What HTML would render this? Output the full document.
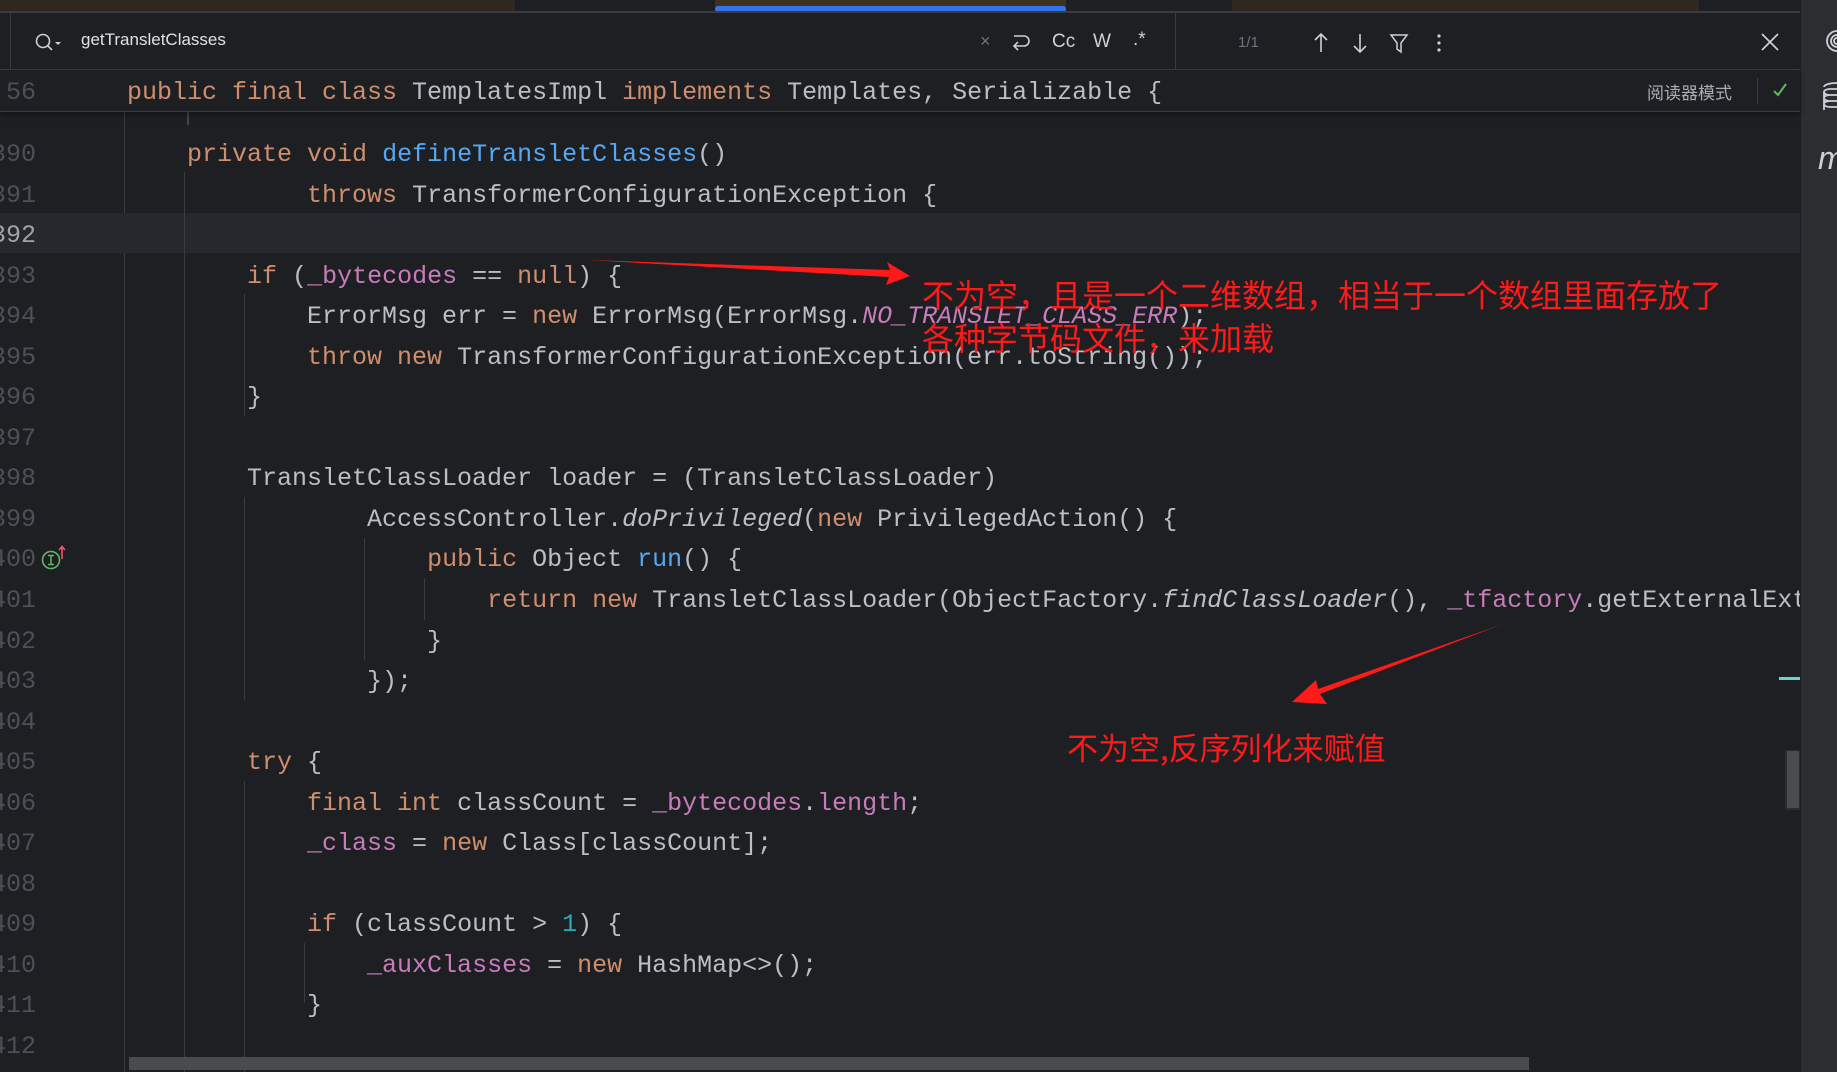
<!DOCTYPE html>
<html><head><meta charset="utf-8"><style>
*{margin:0;padding:0;box-sizing:border-box}
body{width:1837px;height:1072px;background:#1e1f22;position:relative;overflow:hidden;font-family:"Liberation Sans","Noto Sans CJK SC",sans-serif}
.abs{position:absolute}
.code{font-family:"Liberation Mono",monospace;font-size:25px;white-space:pre;color:#bcbec4;line-height:40.55px;height:40.55px}
.k{color:#cf8e6d}.f{color:#56a8f5}.v{color:#c77dbb}.n{color:#2aacb8}.i{font-style:italic}.vi{color:#c77dbb;font-style:italic}
.ln{font-family:"Liberation Mono",monospace;font-size:25px;color:#4b5059;text-align:right;width:36px;line-height:40.55px;height:40.55px;overflow:visible;white-space:nowrap;direction:rtl}
.g{position:absolute;width:1px;background:#393b40}
.ic{position:absolute;color:#ced0d6;font-size:19px}
.red{color:#ff1a1a;font-family:"Noto Sans CJK SC","WenQuanYi Zen Hei",sans-serif}
</style></head><body>
<div class="abs" style="left:0;top:0;width:1800px;height:11px;background:#1e1f22"></div>
<div class="abs" style="left:0;top:0;width:515px;height:11px;background:#2e2820"></div>
<div class="abs" style="left:715px;top:0;width:351px;height:11px;background:#3d3122"></div>
<div class="abs" style="left:1232px;top:0;width:467px;height:11px;background:#2e2820"></div>
<div class="abs" style="left:715px;top:6px;width:351px;height:6px;background:#3574f0;border-radius:3px"></div>
<div class="abs" style="left:0;top:11px;width:1800px;height:2px;background:#393b40"></div>
<div class="abs" style="left:0;top:13px;width:1800px;height:57px;background:#1e1f22;border-bottom:1px solid #393b40"></div>
<div class="abs" style="left:10px;top:13px;width:1px;height:57px;background:#393b40"></div>
<div class="abs" style="left:1175px;top:13px;width:1px;height:57px;background:#393b40"></div>
<svg class="abs" style="left:34px;top:31px" width="30" height="24" viewBox="0 0 30 24"><circle cx="9" cy="10" r="6.5" fill="none" stroke="#ced0d6" stroke-width="1.6"/><path d="M13.5 14.5 L18 19" stroke="#ced0d6" stroke-width="1.6"/><path d="M21 11 L27 11 L24 14Z" fill="#ced0d6"/></svg>
<div class="abs" style="left:81px;top:30px;font-size:17px;color:#dfe1e5">getTransletClasses</div>
<div class="ic" style="left:980px;top:31px;color:#6f737a;font-size:18px">×</div>
<svg class="abs" style="left:1009px;top:30px" width="24" height="24" viewBox="0 0 24 24"><path d="M5 6 H15 a5 5 0 0 1 0 10 H5 M9 12 L5 16 L9 20" fill="none" stroke="#ced0d6" stroke-width="1.6"/></svg>
<div class="ic" style="left:1052px;top:31px">Cc</div>
<div class="ic" style="left:1093px;top:31px">W</div>
<div class="ic" style="left:1133px;top:29px">.*</div>
<div class="abs" style="left:1238px;top:34px;font-size:15px;color:#6f737a">1/1</div>
<svg class="abs" style="left:1310px;top:31px" width="150" height="24" viewBox="0 0 150 24"><path d="M11 3 V21 M5 9 L11 3 L17 9" fill="none" stroke="#ced0d6" stroke-width="1.6"/><path d="M50 3 V21 M44 15 L50 21 L56 15" fill="none" stroke="#ced0d6" stroke-width="1.6"/><path d="M81 4 H97 L91 12 V21 L87 18 V12Z" fill="none" stroke="#ced0d6" stroke-width="1.5"/><circle cx="129" cy="5" r="1.6" fill="#ced0d6"/><circle cx="129" cy="12" r="1.6" fill="#ced0d6"/><circle cx="129" cy="19" r="1.6" fill="#ced0d6"/></svg>
<svg class="abs" style="left:1760px;top:32px" width="20" height="20" viewBox="0 0 20 20"><path d="M2 2 L18 18 M18 2 L2 18" stroke="#ced0d6" stroke-width="1.7"/></svg>
<div class="abs" style="left:0;top:70px;width:1800px;height:42px;background:#1e1f22;border-bottom:1px solid #393b40;box-shadow:0 3px 5px rgba(0,0,0,.35);z-index:3">
<div class="ln abs" style="left:0;top:3px">56</div>
<div class="code abs" style="left:127px;top:3px"><span class="k">public final class </span>TemplatesImpl <span class="k">implements </span>Templates, Serializable {</div>
<div class="abs" style="left:1647px;top:9px;font-size:17px;color:#a8adb5;font-family:'Noto Sans CJK SC',sans-serif">阅读器模式</div>
<div class="abs" style="left:1757px;top:8px;width:1px;height:26px;background:#393b40"></div>
<svg class="abs" style="left:1772px;top:12px" width="16" height="16" viewBox="0 0 16 16"><path d="M2 9 L6 13 L14 2" fill="none" stroke="#5fb865" stroke-width="2"/></svg>
</div>
<div class="abs" style="left:187px;top:112px;width:2px;height:13px;background:#3b4a3e"></div>
<div class="g" style="left:124px;top:112px;height:960px"></div>
<div class="abs" style="left:0;top:213px;width:1800px;height:40px;background:#26282e"></div>
<div class="g" style="left:184px;top:172px;height:900px"></div>
<div class="g" style="left:244px;top:294px;height:122px"></div>
<div class="g" style="left:244px;top:497px;height:203px"></div>
<div class="g" style="left:244px;top:781px;height:291px"></div>
<div class="g" style="left:304px;top:943px;height:60px"></div>
<div class="g" style="left:364px;top:538px;height:122px"></div>
<div class="g" style="left:424px;top:578px;height:42px"></div>
<div class="abs" style="left:0;top:135px;width:1800px;height:927px;overflow:hidden">
<div class="abs" style="left:0;top:0">
<div class="ln">390</div><div class="ln">391</div><div class="ln" style="color:#a1a3ab">392</div><div class="ln">393</div><div class="ln">394</div><div class="ln">395</div><div class="ln">396</div><div class="ln">397</div><div class="ln">398</div><div class="ln">399</div><div class="ln">400</div><div class="ln">401</div><div class="ln">402</div><div class="ln">403</div><div class="ln">404</div><div class="ln">405</div><div class="ln">406</div><div class="ln">407</div><div class="ln">408</div><div class="ln">409</div><div class="ln">410</div><div class="ln">411</div><div class="ln">412</div>
</div>
<div class="abs" style="left:127px;top:0">
<div class="code">    <span class="k">private void </span><span class="f">defineTransletClasses</span>()</div>
<div class="code">            <span class="k">throws </span>TransformerConfigurationException {</div>
<div class="code"> </div>
<div class="code">        <span class="k">if </span>(<span class="v">_bytecodes</span> == <span class="k">null</span>) {</div>
<div class="code">            ErrorMsg err = <span class="k">new </span>ErrorMsg(ErrorMsg.<span class="vi">NO_TRANSLET_CLASS_ERR</span>);</div>
<div class="code">            <span class="k">throw new </span>TransformerConfigurationException(err.toString());</div>
<div class="code">        }</div>
<div class="code"> </div>
<div class="code">        TransletClassLoader loader = (TransletClassLoader)</div>
<div class="code">                AccessController.<span class="i">doPrivileged</span>(<span class="k">new </span>PrivilegedAction() {</div>
<div class="code">                    <span class="k">public </span>Object <span class="f">run</span>() {</div>
<div class="code">                        <span class="k">return new </span>TransletClassLoader(ObjectFactory.<span class="i">findClassLoader</span>(), <span class="v">_tfactory</span>.getExternalExtensionsMap());</div>
<div class="code">                    }</div>
<div class="code">                });</div>
<div class="code"> </div>
<div class="code">        <span class="k">try </span>{</div>
<div class="code">            <span class="k">final int </span>classCount = <span class="v">_bytecodes</span>.<span class="v">length</span>;</div>
<div class="code">            <span class="v">_class</span> = <span class="k">new </span>Class[classCount];</div>
<div class="code"> </div>
<div class="code">            <span class="k">if </span>(classCount > <span class="n">1</span>) {</div>
<div class="code">                <span class="v">_auxClasses</span> = <span class="k">new </span>HashMap<>();</div>
<div class="code">            }</div>
<div class="code"> </div>
</div>
</div>
<svg class="abs" style="left:40px;top:545px" width="30" height="26" viewBox="0 0 30 26"><circle cx="11" cy="15" r="8.5" fill="none" stroke="#5fb865" stroke-width="1.6"/><path d="M8 10.5 H14 M11 10.5 V19.5 M8 19.5 H14" stroke="#5fb865" stroke-width="1.5"/><path d="M22 14 V2 M19 5 L22 1.5 L25 5" fill="none" stroke="#f75464" stroke-width="1.6"/></svg>
<svg class="abs" style="left:0;top:0;z-index:2" width="1837" height="1072"><path d="M586 260 L890 270 L887 262 L910 276 L886 285 L889 277 Z" fill="#ff1a1a"/><path d="M1503 624 L1320 694 L1327 704 L1292 702 L1316 680 L1318 689 Z" fill="#ff1a1a"/></svg>
<div class="abs red" style="left:922px;top:273px;font-size:32px;line-height:43px;z-index:2;white-space:nowrap">不为空，且是一个二维数组，相当于一个数组里面存放了<br>各种字节码文件，来加载</div>
<div class="abs red" style="left:1067px;top:724px;font-size:31px;z-index:2;white-space:nowrap">不为空,反序列化来赋值</div>
<div class="abs" style="left:1779px;top:677px;width:21px;height:3px;background:#6fd1d1"></div>
<div class="abs" style="left:1785px;top:750px;width:15px;height:60px;background:#2b2d30"></div>
<div class="abs" style="left:1787px;top:751px;width:12px;height:57px;background:#4a4b4e"></div>
<div class="abs" style="left:129px;top:1057px;width:1400px;height:13px;background:#4a4b4e"></div>
<div class="abs" style="left:1801px;top:0;width:36px;height:1072px;background:#2b2d30"></div>
<svg class="abs" style="left:1818px;top:27px" width="19" height="170" viewBox="0 0 19 170"><path d="M19 4 A10 10 0 1 0 19 24 M19 8 A6 6 0 1 0 19 20 M19 11 A3 3 0 1 0 19 17" fill="none" stroke="#ced0d6" stroke-width="1.8"/><path d="M19 62 H12 a6 3 0 0 0 0 6 H19 M19 68 H12 a6 3 0 0 0 0 6 H19 M19 74 H12 a6 3 0 0 0 0 6 H19 M6 65 V83 M19 56 a13 4 0 0 0 -13 4" fill="none" stroke="#ced0d6" stroke-width="1.8"/></svg>
<div class="abs" style="left:1818px;top:140px;font-size:32px;font-style:italic;color:#ced0d6">m</div>
</body></html>
